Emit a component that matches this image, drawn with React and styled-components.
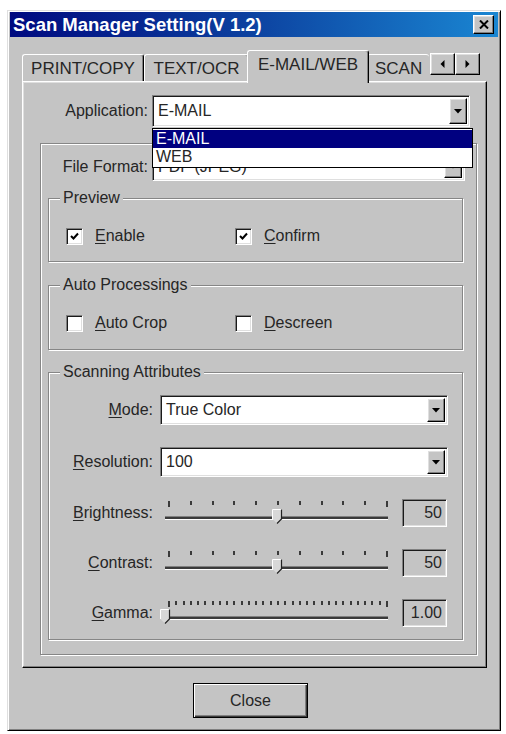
import React from "react"
import styled, { createGlobalStyle, css } from "styled-components"

const FACE = "#c4c4c4"

const GlobalStyle = createGlobalStyle`
  body {
    margin: 0;
    background: #fff;
    font-family: "Liberation Sans", Arial, sans-serif;
    color: #262626;
  }
`

const raised = css`
  border: 1px solid;
  border-color: #fff #000 #000 #fff;
  box-shadow: inset -1px -1px 0 #808080, inset 1px 1px 0 #dfdfdf;
`

const sunken = css`
  border: 1px solid;
  border-color: #808080 #fff #fff #808080;
  box-shadow: inset 1px 1px 0 #1a1a1a, inset -1px -1px 0 #dfdfdf;
`

const etched = css`
  border: 1px solid #868686;
  box-shadow: inset 1px 1px 0 #fff, 1px 1px 0 #fff;
`

const Page = styled.div`
  padding: 10px 0 0 7px;
`

const Window = styled.div`
  width: 494px;
  height: 721px;
  box-sizing: border-box;
  background: ${FACE};
  border: 1px solid;
  border-color: #dfdfdf #000 #000 #dfdfdf;
  box-shadow: inset 1px 1px 0 #fff, inset -1px -1px 0 #808080;
  padding: 1px 2px 2px 2px;
  display: flex;
  flex-direction: column;
`

const TitleBar = styled.div`
  height: 25px;
  display: flex;
  align-items: center;
  justify-content: space-between;
  padding: 0 4px 0 3px;
  background: linear-gradient(90deg, #000a80 0%, #0b3c9c 45%, #1a86d2 100%);
  color: #fff;
  font-weight: bold;
  font-size: 18.5px;
`

const CloseBox = styled.div`
  width: 21px;
  height: 19px;
  box-sizing: border-box;
  background: ${FACE};
  ${raised};
  display: flex;
  align-items: center;
  justify-content: center;
`

const TabRow = styled.div`
  display: flex;
  align-items: flex-end;
  height: 31px;
  margin: 13px 0 0 12px;
`

const Tab = styled.div`
  width: ${p => p.$w}px;
  height: ${p => (p.$active ? 33 : 27)}px;
  box-sizing: border-box;
  margin: ${p => (p.$active ? "0 -2px -2px" : "0")};
  position: relative;
  z-index: ${p => (p.$active ? 2 : 1)};
  background: ${FACE};
  border-top: 1px solid #fff;
  border-left: 1px solid #fff;
  border-right: ${p => (p.$clip ? "none" : "1px solid #000")};
  box-shadow: ${p => (p.$clip ? "none" : "inset -1px 0 0 #808080")};
  border-radius: 3px 3px 0 0;
  display: flex;
  align-items: center;
  justify-content: ${p => (p.$clip ? "flex-start" : "center")};
  padding: ${p => (p.$active ? "0 0 4px" : p.$clip ? "1px 0 0 7px" : "1px 0 0")};
  font-size: 17px;
  white-space: nowrap;
  overflow: hidden;
`

const ArrowGroup = styled.div`
  align-self: flex-start;
  display: flex;
  margin: 3px 0 0 1px;
`

const ArrowBtn = styled.div`
  width: 25px;
  height: 22px;
  box-sizing: border-box;
  background: ${FACE};
  ${raised};
  display: flex;
  align-items: center;
  justify-content: center;
`

const Panel = styled.div`
  margin-left: 12px;
  width: 465px;
  height: 587px;
  box-sizing: border-box;
  background: ${FACE};
  ${raised};
  padding-top: 13px;
`

const FieldRow = styled.div`
  display: grid;
  grid-template-columns: ${p => p.$label}px ${p => p.$field}px;
  column-gap: 4px;
  align-items: center;
`

const Label = styled.div`
  text-align: right;
  font-size: 16px;
  white-space: nowrap;
`

const ComboWrap = styled.div`
  position: relative;
`

const Combo = styled.div`
  width: ${p => (p.$w ? `${p.$w}px` : "auto")};
  height: ${p => p.$h}px;
  box-sizing: border-box;
  background: #fff;
  ${sunken};
  padding: 2px;
  display: flex;
  align-items: stretch;
  font-size: 16px;
`

const ComboText = styled.div`
  flex: 1;
  display: flex;
  align-items: center;
  padding-left: 3px;
  white-space: nowrap;
  overflow: hidden;
`

const DropBtn = styled.div`
  width: 18px;
  box-sizing: border-box;
  background: ${FACE};
  ${raised};
  display: flex;
  align-items: center;
  justify-content: center;
`

const DropList = styled.div`
  position: absolute;
  top: calc(100% + 1px);
  left: 0;
  width: calc(100% + 3px);
  box-sizing: border-box;
  background: #fff;
  border: 1px solid #000;
  padding: 1px 0;
  z-index: 5;
  font-size: 16px;
`

const DropItem = styled.div`
  height: 18px;
  line-height: 18px;
  padding-left: 3px;
  background: ${p => (p.$sel ? "#000080" : "#fff")};
  color: ${p => (p.$sel ? "#fff" : "#262626")};
`

const InnerFrame = styled.div`
  margin: 16px 0 0 17px;
  width: 437px;
  height: 512px;
  box-sizing: border-box;
  ${etched};
  padding-top: 8px;
`

const GroupBox = styled.div`
  position: relative;
  margin: ${p => p.$top}px 0 0 7px;
  width: 415px;
  height: ${p => p.$h}px;
  box-sizing: border-box;
  ${etched};
  padding-top: ${p => p.$pad}px;
`

const Caption = styled.div`
  position: absolute;
  top: -10px;
  left: 11px;
  padding: 0 3px;
  background: ${FACE};
  font-size: 16px;
  line-height: 18px;
  white-space: nowrap;
`

const CheckRow = styled.div`
  display: flex;
  padding-left: 17px;
`

const CheckItem = styled.div`
  width: ${p => p.$w}px;
  display: flex;
  align-items: center;
  gap: 12px;
  font-size: 16px;
`

const Box = styled.div`
  width: 17px;
  height: 17px;
  box-sizing: border-box;
  background: #fff;
  ${sunken};
  display: flex;
  align-items: center;
  justify-content: center;
`

const U = styled.span`
  text-decoration: underline;
  text-underline-offset: 2px;
`

const AttrGrid = styled.div`
  display: grid;
  grid-template-columns: 104px auto;
  column-gap: 7px;
  row-gap: 22px;
  align-items: center;
`

const SliderCell = styled.div`
  display: flex;
  align-items: center;
`

const SliderBox = styled.div`
  width: 228px;
  height: 28px;
  box-sizing: border-box;
  padding-left: 5px;
`

const Ticks = styled.div`
  display: flex;
  justify-content: space-between;
  align-items: flex-start;
  height: 6px;
  margin: 2px 0 0 3px;
`

const Tick = styled.div`
  width: 2px;
  height: ${p => (p.$tall ? 6 : 4)}px;
  background: #3a3a3a;
`

const Track = styled.div`
  position: relative;
  margin-top: 9px;
  height: 2px;
  background: #3a3a3a;
  border-top: 1px solid #808080;
  border-bottom: 1px solid #fff;
`

const Thumb = styled.svg`
  position: absolute;
  top: -8px;
`

const ValueBox = styled.div`
  margin-left: 14px;
  width: 45px;
  height: 28px;
  box-sizing: border-box;
  ${sunken};
  background: ${FACE};
  display: flex;
  align-items: center;
  justify-content: flex-end;
  padding-right: 4px;
  font-size: 16px;
`

const ButtonRow = styled.div`
  margin: 15px 0 0 183px;
`

const Button = styled.div`
  width: 115px;
  height: 35px;
  box-sizing: border-box;
  border: 1px solid #000;
  box-shadow: inset 1px 1px 0 #fff, inset -1px -1px 0 #3a3a3a, inset -2px -2px 0 #808080;
  background: ${FACE};
  display: flex;
  align-items: center;
  justify-content: center;
  font-size: 16px;
`

const DownArrow = () => (
  <svg width="8" height="5" viewBox="0 0 8 5">
    <polygon points="0,0 8,0 4,4.5" fill="#000" />
  </svg>
)

const SideArrow = ({ dir }) => (
  <svg width="5" height="8" viewBox="0 0 5 8">
    <polygon points={dir === "left" ? "4.5,0 0.5,4 4.5,8" : "0.5,0 4.5,4 0.5,8"} fill="#000" />
  </svg>
)

const CheckMark = () => (
  <svg width="9" height="9" viewBox="0 0 9 9">
    <polyline points="1,4 3.5,6.5 8,1.5" fill="none" stroke="#000" strokeWidth="2" />
  </svg>
)

const Check = ({ checked, children, w }) => (
  <CheckItem $w={w}>
    <Box>{checked && <CheckMark />}</Box>
    <span>{children}</span>
  </CheckItem>
)

const Slider = ({ ticks, value }) => (
  <SliderBox>
    <Ticks>
      {Array.from({ length: ticks }, (_, i) => (
        <Tick key={i} $tall={i === 0 || i === ticks - 1} />
      ))}
    </Ticks>
    <Track>
      <Thumb width="11" height="15" viewBox="0 0 11 15" style={{ left: `calc(${value * 100}% - 5px)` }}>
        <path d="M0.5 0.5 H9.5 V10 L5 14.5 L0.5 10 Z" fill="#d8d8d8" />
        <path d="M0.5 10 V0.5 H9.5" fill="none" stroke="#fff" />
        <path d="M9.5 0.5 V10 L5 14.5" fill="none" stroke="#222" strokeWidth="1.2" />
      </Thumb>
    </Track>
  </SliderBox>
)

const tabs = [
  { label: "PRINT/COPY", w: 122 },
  { label: "TEXT/OCR", w: 105 },
  { label: "E-MAIL/WEB", w: 122, active: true },
  { label: "SCAN", w: 62, clip: true },
]

const sliders = [
  { key: "B", rest: "rightness:", ticks: 11, value: 0.5, text: "50" },
  { key: "C", rest: "ontrast:", ticks: 11, value: 0.5, text: "50" },
  { key: "G", rest: "amma:", ticks: 31, value: 0, text: "1.00" },
]

export default function App() {
  return (
    <Page>
      <GlobalStyle />
      <Window>
        <TitleBar>
          <span>Scan Manager Setting(V 1.2)</span>
          <CloseBox>
            <svg width="10" height="9" viewBox="0 0 10 9">
              <path d="M1 0.5 L9 8.5 M9 0.5 L1 8.5" stroke="#000" strokeWidth="2" />
            </svg>
          </CloseBox>
        </TitleBar>

        <TabRow>
          {tabs.map(t => (
            <Tab key={t.label} $w={t.w} $active={t.active} $clip={t.clip}>
              {t.label}
            </Tab>
          ))}
          <ArrowGroup>
            <ArrowBtn>
              <SideArrow dir="left" />
            </ArrowBtn>
            <ArrowBtn>
              <SideArrow dir="right" />
            </ArrowBtn>
          </ArrowGroup>
        </TabRow>

        <Panel>
          <FieldRow $label={125} $field={318}>
            <Label>Application:</Label>
            <ComboWrap>
              <Combo $h={32}>
                <ComboText>E-MAIL</ComboText>
                <DropBtn>
                  <DownArrow />
                </DropBtn>
              </Combo>
              <DropList>
                <DropItem $sel>E-MAIL</DropItem>
                <DropItem>WEB</DropItem>
              </DropList>
            </ComboWrap>
          </FieldRow>

          <InnerFrame>
            <FieldRow $label={107} $field={313}>
              <Label>File Format:</Label>
              <Combo $h={29}>
                <ComboText>PDF (JPEG)</ComboText>
                <DropBtn>
                  <DownArrow />
                </DropBtn>
              </Combo>
            </FieldRow>

            <GroupBox $top={17} $h={64} $pad={28}>
              <Caption>Preview</Caption>
              <CheckRow>
                <Check checked w={169}>
                  <U>E</U>nable
                </Check>
                <Check checked w={160}>
                  <U>C</U>onfirm
                </Check>
              </CheckRow>
            </GroupBox>

            <GroupBox $top={23} $h={65} $pad={28}>
              <Caption>Auto Processings</Caption>
              <CheckRow>
                <Check w={169}>
                  <U>A</U>uto Crop
                </Check>
                <Check w={160}>
                  <U>D</U>escreen
                </Check>
              </CheckRow>
            </GroupBox>

            <GroupBox $top={22} $h={268} $pad={22}>
              <Caption>Scanning Attributes</Caption>
              <AttrGrid>
                <Label>
                  <U>M</U>ode:
                </Label>
                <Combo $h={30} $w={288}>
                  <ComboText>True Color</ComboText>
                  <DropBtn>
                    <DownArrow />
                  </DropBtn>
                </Combo>

                <Label>
                  <U>R</U>esolution:
                </Label>
                <Combo $h={30} $w={288}>
                  <ComboText>100</ComboText>
                  <DropBtn>
                    <DownArrow />
                  </DropBtn>
                </Combo>

                {sliders.map(s => (
                  <React.Fragment key={s.key}>
                    <Label>
                      <U>{s.key}</U>
                      {s.rest}
                    </Label>
                    <SliderCell>
                      <Slider ticks={s.ticks} value={s.value} />
                      <ValueBox>{s.text}</ValueBox>
                    </SliderCell>
                  </React.Fragment>
                ))}
              </AttrGrid>
            </GroupBox>
          </InnerFrame>
        </Panel>

        <ButtonRow>
          <Button>Close</Button>
        </ButtonRow>
      </Window>
    </Page>
  )
}
